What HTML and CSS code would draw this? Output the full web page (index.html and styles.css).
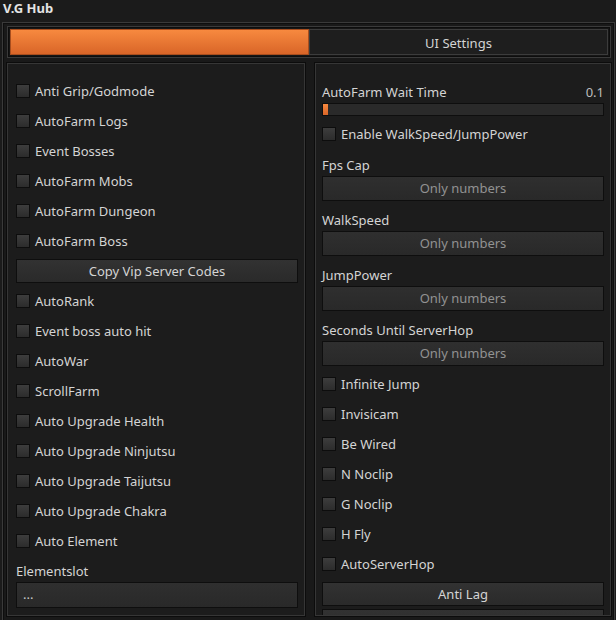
FILE: index.html
```html
<!DOCTYPE html>
<html>
<head>
<meta charset="utf-8">
<link rel="stylesheet" href="styles.css">
</head>
<body>
<div class="title">V.G Hub</div>
<div class="frame">
  <div class="tabbar">
    <div class="tab active"></div>
    <div class="tab">UI Settings</div>
  </div>
  <div class="panels">
    <div class="panel left">
      <div class="check"><span class="box"></span>Anti Grip/Godmode</div>
      <div class="check"><span class="box"></span>AutoFarm Logs</div>
      <div class="check"><span class="box"></span>Event Bosses</div>
      <div class="check"><span class="box"></span>AutoFarm Mobs</div>
      <div class="check"><span class="box"></span>AutoFarm Dungeon</div>
      <div class="check"><span class="box"></span>AutoFarm Boss</div>
      <div class="btn">Copy Vip Server Codes</div>
      <div class="check"><span class="box"></span>AutoRank</div>
      <div class="check"><span class="box"></span>Event boss auto hit</div>
      <div class="check"><span class="box"></span>AutoWar</div>
      <div class="check"><span class="box"></span>ScrollFarm</div>
      <div class="check"><span class="box"></span>Auto Upgrade Health</div>
      <div class="check"><span class="box"></span>Auto Upgrade Ninjutsu</div>
      <div class="check"><span class="box"></span>Auto Upgrade Taijutsu</div>
      <div class="check"><span class="box"></span>Auto Upgrade Chakra</div>
      <div class="check"><span class="box"></span>Auto Element</div>
      <div class="label">Elementslot</div>
      <div class="input dropdown">...</div>
    </div>
    <div class="panel right">
      <div class="slider-label"><span>AutoFarm Wait Time</span><span>0.1</span></div>
      <div class="slider"><div class="fill" style="width:5px"></div></div>
      <div class="check"><span class="box"></span>Enable WalkSpeed/JumpPower</div>
      <div class="label">Fps Cap</div>
      <div class="input">Only numbers</div>
      <div class="label">WalkSpeed</div>
      <div class="input">Only numbers</div>
      <div class="label">JumpPower</div>
      <div class="input">Only numbers</div>
      <div class="label">Seconds Until ServerHop</div>
      <div class="input">Only numbers</div>
      <div class="check first"><span class="box"></span>Infinite Jump</div>
      <div class="check"><span class="box"></span>Invisicam</div>
      <div class="check"><span class="box"></span>Be Wired</div>
      <div class="check"><span class="box"></span>N Noclip</div>
      <div class="check"><span class="box"></span>G Noclip</div>
      <div class="check"><span class="box"></span>H Fly</div>
      <div class="check"><span class="box"></span>AutoServerHop</div>
      <div class="btn">Anti Lag</div>
      <div class="btn">&nbsp;</div>
    </div>
  </div>
</div>
</body>
</html>
```
FILE: styles.css
```css
html, body {
  margin: 0;
  padding: 0;
  background: #1b1b1b;
  overflow: hidden;
  height: 620px;
}
body {
  font-family: "Noto Sans", "Open Sans", sans-serif;
  font-size: 13px;
  color: #d4d4d4;
}
.title {
  height: 22px;
  line-height: 17px;
  padding-left: 3px;
  font-weight: bold;
  font-size: 13px;
  color: #e4e4e4;
}
.frame {
  margin-left: 2px;
  width: 604px;
  height: 620px;
  border: 1px solid #3a3a3a;
  box-shadow: inset 0 0 0 1px #0e0e0e;
  padding: 3px 3px 0 4px;
  background: #191919;
}
.tabbar {
  display: flex;
  height: 26px;
  padding: 2px;
  border: 1px solid #3a3a3a;
  box-shadow: inset 0 0 0 1px #0d0d0d;
  background: #161616;
}
.tab {
  flex: 1;
  text-align: center;
  line-height: 26px;
  box-sizing: border-box;
  border: 1px solid #3c3c3c;
  background: #1e1e1e;
  color: #d4d4d4;
}
.tab.active {
  border-color: #a84e1e;
  background: linear-gradient(#f7893f, #d96528);
}
.panels {
  display: grid;
  grid-template-columns: 298px 296px;
  column-gap: 10px;
  margin-top: 5px;
}
.panel {
  box-sizing: border-box;
  border: 1px solid #363636;
  box-shadow: 0 0 0 1px #0c0c0c;
  background: #1c1c1c;
  height: 553px;
  overflow: hidden;
}
.panel.left {
  padding: 12px 6px 0 8px;
}
.panel.right {
  padding: 17px 6px 0 6px;
}
.check {
  display: flex;
  align-items: center;
  height: 30px;
}
.box {
  width: 12px;
  height: 12px;
  border: 1px solid #0d0d0d;
  background: linear-gradient(#3d3d3d, #2c2c2c);
  margin-right: 5px;
  flex: none;
}
.btn {
  height: 22px;
  line-height: 22px;
  margin: 3px 0;
  text-align: center;
  border: 1px solid #0e0e0e;
  background: linear-gradient(#323232, #2a2a2a);
  color: #d4d4d4;
}
.right .btn + .btn {
  margin-top: 1px;
}
.label {
  height: 22px;
  line-height: 22px;
}
.left .label {
  height: 26px;
  line-height: 30px;
}
.input {
  height: 23px;
  line-height: 23px;
  text-align: center;
  border: 1px solid #0e0e0e;
  background: linear-gradient(#2f2f2f, #292929);
  color: #929292;
  margin-bottom: 8px;
}
.input.dropdown {
  text-align: left;
  padding-left: 6px;
  color: #c8c8c8;
  height: 24px;
}
.slider-label {
  display: flex;
  justify-content: space-between;
  height: 22px;
  line-height: 22px;
}
.slider-label span:last-child {
  color: #bdbdbd;
}
.slider {
  height: 11px;
  border: 1px solid #0e0e0e;
  background: #2a2a2a;
  margin-bottom: 3px;
}
.fill {
  height: 100%;
  background: linear-gradient(#f7893f, #d96528);
}
.right .check + .label {
  margin-top: 5px;
}
.right .input + .check {
  margin-top: -5px;
}
```
